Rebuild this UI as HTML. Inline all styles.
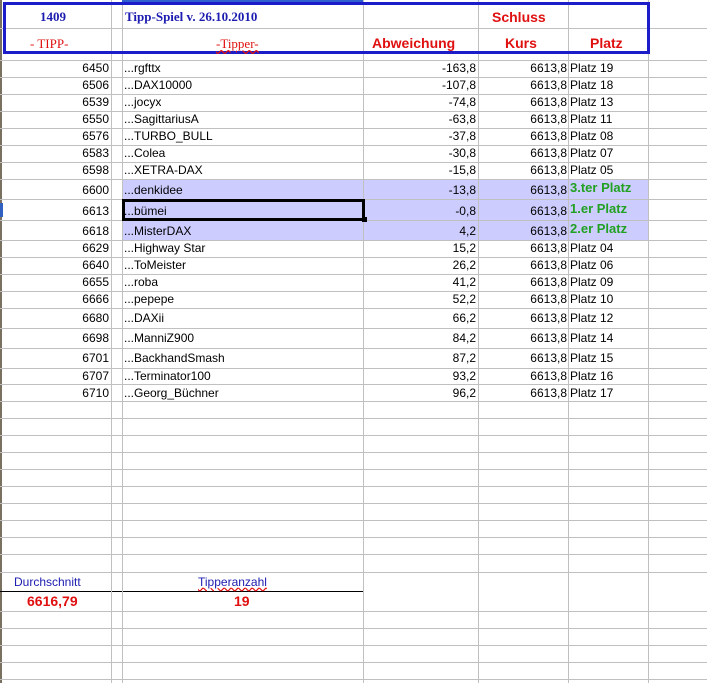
<!DOCTYPE html>
<html><head><meta charset="utf-8"><style>
*{margin:0;padding:0;box-sizing:border-box}
body{width:707px;height:683px;background:#fff;position:relative;overflow:hidden;font-family:"Liberation Sans",Arial,sans-serif;font-size:12px;color:#000}
.h{position:absolute;left:0;width:707px;height:1px;background:#c0c0c0}
.v{position:absolute;top:0;height:683px;width:1px;background:#c0c0c0}
.t{position:absolute;white-space:nowrap;line-height:14px}
.r{text-align:right}
.g{color:#22a022;font-weight:bold;font-size:13px}
</style></head><body>
<div style="position:absolute;left:0;top:0;width:2px;height:683px;background:#7a7060"></div>
<div style="position:absolute;left:0;top:203px;width:3px;height:14px;background:#3060c0"></div>
<div style="position:absolute;left:122px;top:179px;width:526px;height:61px;background:#ccccff"></div>

<div class="h" style="top:28px"></div><div class="h" style="top:60px"></div><div class="h" style="top:77px"></div><div class="h" style="top:94px"></div><div class="h" style="top:111px"></div><div class="h" style="top:128px"></div><div class="h" style="top:145px"></div><div class="h" style="top:162px"></div><div class="h" style="top:179px"></div><div class="h" style="top:199px"></div><div class="h" style="top:220px"></div><div class="h" style="top:240px"></div><div class="h" style="top:257px"></div><div class="h" style="top:274px"></div><div class="h" style="top:291px"></div><div class="h" style="top:308px"></div><div class="h" style="top:328px"></div><div class="h" style="top:348px"></div><div class="h" style="top:368px"></div><div class="h" style="top:384px"></div><div class="h" style="top:401px"></div><div class="h" style="top:418px"></div><div class="h" style="top:435px"></div><div class="h" style="top:452px"></div><div class="h" style="top:469px"></div><div class="h" style="top:486px"></div><div class="h" style="top:503px"></div><div class="h" style="top:520px"></div><div class="h" style="top:537px"></div><div class="h" style="top:554px"></div><div class="h" style="top:572px"></div><div class="h" style="top:611px"></div><div class="h" style="top:628px"></div><div class="h" style="top:645px"></div><div class="h" style="top:662px"></div><div class="h" style="top:679px"></div>
<div style="position:absolute;left:0;top:591px;width:363px;height:1px;background:#000"></div>

<div class="v" style="left:111px"></div><div class="v" style="left:122px"></div><div class="v" style="left:363px"></div><div class="v" style="left:478px"></div><div class="v" style="left:568px"></div><div class="v" style="left:648px"></div>

<div style="position:absolute;left:3px;top:2px;width:647px;height:52px;border:3px solid #1c1cc8;background:#fff"></div>
<div style="position:absolute;left:6px;top:28px;width:641px;height:1px;background:#c0c0c0"></div>
<div style="position:absolute;left:111px;top:5px;width:1px;height:46px;background:#c0c0c0"></div>
<div style="position:absolute;left:122px;top:5px;width:1px;height:46px;background:#c0c0c0"></div>
<div style="position:absolute;left:363px;top:5px;width:1px;height:46px;background:#c0c0c0"></div>
<div style="position:absolute;left:478px;top:5px;width:1px;height:46px;background:#c0c0c0"></div>
<div style="position:absolute;left:568px;top:5px;width:1px;height:46px;background:#c0c0c0"></div>
<div style="position:absolute;left:122px;top:0;width:241px;height:2px;background:#3060d0"></div>

<div class="t" style="left:40px;top:10px;font-family:'Liberation Serif',serif;font-weight:bold;color:#1c1cb0;font-size:13px">1409</div>
<div class="t" style="left:125px;top:10px;font-family:'Liberation Serif',serif;font-weight:bold;color:#1c1cb0;font-size:13px">Tipp-Spiel v. 26.10.2010</div>
<div class="t" style="left:492px;top:10px;color:#e01010;font-weight:bold;font-size:14px">Schluss</div>
<div class="t" style="left:30px;top:37px;font-family:'Liberation Serif',serif;color:#e01010;font-size:13px">- TIPP-</div>
<div class="t" style="left:216px;top:37px;font-family:'Liberation Serif',serif;color:#e01010;font-size:13px;text-decoration:underline wavy #e01010">-Tipper-</div>
<div class="t" style="left:372px;top:36px;color:#e01010;font-weight:bold;font-size:14px">Abweichung</div>
<div class="t" style="left:505px;top:36px;color:#e01010;font-weight:bold;font-size:14px">Kurs</div>
<div class="t" style="left:590px;top:36px;color:#e01010;font-weight:bold;font-size:14px">Platz</div>

<div id="rows"></div>
<!-- data rows -->
<div class="t r" style="left:60px;width:49px;top:61px">6450</div><div class="t" style="left:124px;top:61px">...rgfttx</div><div class="t r" style="left:380px;width:96px;top:61px">-163,8</div><div class="t r" style="left:480px;width:87px;top:61px">6613,8</div><div class="t" style="left:570px;top:61px">Platz 19</div>
<div class="t r" style="left:60px;width:49px;top:78px">6506</div><div class="t" style="left:124px;top:78px">...DAX10000</div><div class="t r" style="left:380px;width:96px;top:78px">-107,8</div><div class="t r" style="left:480px;width:87px;top:78px">6613,8</div><div class="t" style="left:570px;top:78px">Platz 18</div>
<div class="t r" style="left:60px;width:49px;top:95px">6539</div><div class="t" style="left:124px;top:95px">...jocyx</div><div class="t r" style="left:380px;width:96px;top:95px">-74,8</div><div class="t r" style="left:480px;width:87px;top:95px">6613,8</div><div class="t" style="left:570px;top:95px">Platz 13</div>
<div class="t r" style="left:60px;width:49px;top:112px">6550</div><div class="t" style="left:124px;top:112px">...SagittariusA</div><div class="t r" style="left:380px;width:96px;top:112px">-63,8</div><div class="t r" style="left:480px;width:87px;top:112px">6613,8</div><div class="t" style="left:570px;top:112px">Platz 11</div>
<div class="t r" style="left:60px;width:49px;top:129px">6576</div><div class="t" style="left:124px;top:129px">...TURBO_BULL</div><div class="t r" style="left:380px;width:96px;top:129px">-37,8</div><div class="t r" style="left:480px;width:87px;top:129px">6613,8</div><div class="t" style="left:570px;top:129px">Platz 08</div>
<div class="t r" style="left:60px;width:49px;top:146px">6583</div><div class="t" style="left:124px;top:146px">...Colea</div><div class="t r" style="left:380px;width:96px;top:146px">-30,8</div><div class="t r" style="left:480px;width:87px;top:146px">6613,8</div><div class="t" style="left:570px;top:146px">Platz 07</div>
<div class="t r" style="left:60px;width:49px;top:163px">6598</div><div class="t" style="left:124px;top:163px">...XETRA-DAX</div><div class="t r" style="left:380px;width:96px;top:163px">-15,8</div><div class="t r" style="left:480px;width:87px;top:163px">6613,8</div><div class="t" style="left:570px;top:163px">Platz 05</div>
<div class="t r" style="left:60px;width:49px;top:183px">6600</div><div class="t" style="left:124px;top:183px">...denkidee</div><div class="t r" style="left:380px;width:96px;top:183px">-13,8</div><div class="t r" style="left:480px;width:87px;top:183px">6613,8</div><div class="t g" style="left:570px;top:181px">3.ter Platz</div>
<div class="t r" style="left:60px;width:49px;top:204px">6613</div><div class="t" style="left:124px;top:204px">...bümei</div><div class="t r" style="left:380px;width:96px;top:204px">-0,8</div><div class="t r" style="left:480px;width:87px;top:204px">6613,8</div><div class="t g" style="left:570px;top:202px">1.er Platz</div>
<div class="t r" style="left:60px;width:49px;top:224px">6618</div><div class="t" style="left:124px;top:224px">...MisterDAX</div><div class="t r" style="left:380px;width:96px;top:224px">4,2</div><div class="t r" style="left:480px;width:87px;top:224px">6613,8</div><div class="t g" style="left:570px;top:222px">2.er Platz</div>
<div class="t r" style="left:60px;width:49px;top:241px">6629</div><div class="t" style="left:124px;top:241px">...Highway Star</div><div class="t r" style="left:380px;width:96px;top:241px">15,2</div><div class="t r" style="left:480px;width:87px;top:241px">6613,8</div><div class="t" style="left:570px;top:241px">Platz 04</div>
<div class="t r" style="left:60px;width:49px;top:258px">6640</div><div class="t" style="left:124px;top:258px">...ToMeister</div><div class="t r" style="left:380px;width:96px;top:258px">26,2</div><div class="t r" style="left:480px;width:87px;top:258px">6613,8</div><div class="t" style="left:570px;top:258px">Platz 06</div>
<div class="t r" style="left:60px;width:49px;top:275px">6655</div><div class="t" style="left:124px;top:275px">...roba</div><div class="t r" style="left:380px;width:96px;top:275px">41,2</div><div class="t r" style="left:480px;width:87px;top:275px">6613,8</div><div class="t" style="left:570px;top:275px">Platz 09</div>
<div class="t r" style="left:60px;width:49px;top:292px">6666</div><div class="t" style="left:124px;top:292px">...pepepe</div><div class="t r" style="left:380px;width:96px;top:292px">52,2</div><div class="t r" style="left:480px;width:87px;top:292px">6613,8</div><div class="t" style="left:570px;top:292px">Platz 10</div>
<div class="t r" style="left:60px;width:49px;top:311px">6680</div><div class="t" style="left:124px;top:311px">...DAXii</div><div class="t r" style="left:380px;width:96px;top:311px">66,2</div><div class="t r" style="left:480px;width:87px;top:311px">6613,8</div><div class="t" style="left:570px;top:311px">Platz 12</div>
<div class="t r" style="left:60px;width:49px;top:331px">6698</div><div class="t" style="left:124px;top:331px">...ManniZ900</div><div class="t r" style="left:380px;width:96px;top:331px">84,2</div><div class="t r" style="left:480px;width:87px;top:331px">6613,8</div><div class="t" style="left:570px;top:331px">Platz 14</div>
<div class="t r" style="left:60px;width:49px;top:351px">6701</div><div class="t" style="left:124px;top:351px">...BackhandSmash</div><div class="t r" style="left:380px;width:96px;top:351px">87,2</div><div class="t r" style="left:480px;width:87px;top:351px">6613,8</div><div class="t" style="left:570px;top:351px">Platz 15</div>
<div class="t r" style="left:60px;width:49px;top:369px">6707</div><div class="t" style="left:124px;top:369px">...Terminator100</div><div class="t r" style="left:380px;width:96px;top:369px">93,2</div><div class="t r" style="left:480px;width:87px;top:369px">6613,8</div><div class="t" style="left:570px;top:369px">Platz 16</div>
<div class="t r" style="left:60px;width:49px;top:386px">6710</div><div class="t" style="left:124px;top:386px">...Georg_Büchner</div><div class="t r" style="left:380px;width:96px;top:386px">96,2</div><div class="t r" style="left:480px;width:87px;top:386px">6613,8</div><div class="t" style="left:570px;top:386px">Platz 17</div>

<div style="position:absolute;left:122px;top:199px;width:243px;height:22px;border:3px solid #000"></div>
<div style="position:absolute;left:362px;top:217px;width:5px;height:5px;background:#000"></div>

<div class="t" style="left:14px;top:575px;color:#1c1cb0">Durchschnitt</div>
<div class="t" style="left:198px;top:575px;color:#1c1cb0;text-decoration:underline wavy #e01010">Tipperanzahl</div>
<div class="t" style="left:27px;top:594px;color:#e01010;font-weight:bold;font-size:14px">6616,79</div>
<div class="t" style="left:234px;top:594px;color:#e01010;font-weight:bold;font-size:14px">19</div>
</body></html>
